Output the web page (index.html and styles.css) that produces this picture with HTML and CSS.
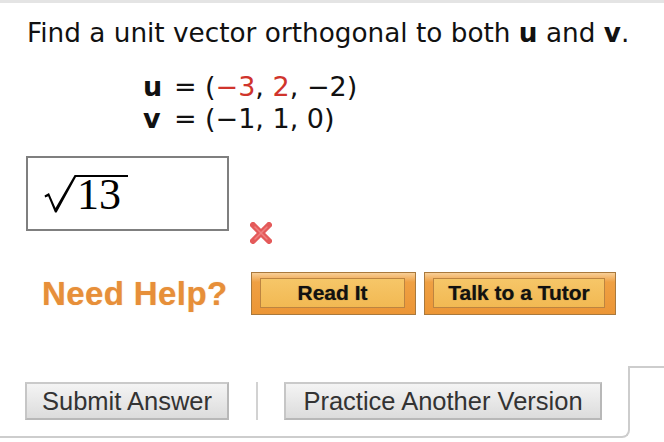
FILE: index.html
```html
<!DOCTYPE html>
<html>
<head>
<meta charset="utf-8">
<link rel="stylesheet" href="styles.css">
</head>
<body>
<div class="topbar"></div>
<main class="content">
  <p class="prompt">Find a unit vector orthogonal to both <b>u</b> and <b>v</b>.</p>
  <div class="vectors">
    <b>u</b><span class="eq">=</span><span>(<span class="red">−3</span>, <span class="red">2</span>, −2)</span>
    <b>v</b><span class="eq">=</span><span>(−1, 1, 0)</span>
  </div>
  <div class="answer-row">
    <div class="answer-box">
      <span class="sqrt">
        <svg class="radical" viewBox="0 0 32 38" width="32" height="38">
          <polygon points="0.5,20.5 5,18 11.5,33 30.6,0 32,0 32,2 12.6,37.5 11,37.5 4.2,21.2 1.2,22.4" fill="#000"/>
        </svg>
        <span class="radicand">13</span>
      </span>
    </div>
    <svg class="wrong" viewBox="0 0 26 26" width="26" height="26">
      <g stroke="#e45a5a" stroke-width="6" stroke-linecap="round">
        <line x1="5" y1="5" x2="21" y2="21"/>
        <line x1="21" y1="5" x2="5" y2="21"/>
      </g>
      <g stroke="#ee8080" stroke-width="1.5" stroke-linecap="round">
        <line x1="7" y1="7" x2="19" y2="19"/>
        <line x1="19" y1="7" x2="7" y2="19"/>
      </g>
    </svg>
  </div>
  <div class="help-row">
    <span class="need-help">Need Help?</span>
    <span class="obtn read"><span class="obtn-inner">Read It</span></span>
    <span class="obtn tutor"><span class="obtn-inner">Talk to a Tutor</span></span>
  </div>
</main>
<footer class="footer">
  <div class="actions">
    <button class="gbtn submit">Submit Answer</button>
    <span class="sep"></span>
    <button class="gbtn practice">Practice Another Version</button>
  </div>
  <div class="rest"></div>
</footer>
</body>
</html>
```

FILE: styles.css
```css
html, body {
  margin: 0;
  padding: 0;
}
body {
  width: 664px;
  height: 442px;
  overflow: hidden;
  background: #fff;
  font-family: "DejaVu Sans", Verdana, sans-serif;
  color: #111;
}
.topbar {
  height: 3px;
  background: #e4e4e4;
}
.prompt {
  margin: 15px 0 0 27px;
  font-size: 26.3px;
  line-height: 30px;
}
.vectors {
  margin: 23px 0 0 143px;
  display: grid;
  grid-template-columns: 31px 31px auto;
  font-size: 27px;
  line-height: 32px;
}
.red {
  color: #d0342c;
}
.answer-row {
  display: flex;
  margin: 21px 0 0 26px;
}
.answer-box {
  box-sizing: border-box;
  width: 203px;
  height: 75px;
  border: 2px solid #7f7f7f;
  display: flex;
  align-items: center;
  padding-left: 16px;
}
.sqrt {
  display: flex;
  align-items: flex-start;
}
.radical {
  display: block;
}
.radicand {
  border-top: 2px solid #000;
  padding: 0 7px 0 1px;
  font-family: "Liberation Serif", "Times New Roman", serif;
  font-size: 44px;
  line-height: 36px;
  color: #000;
}
.wrong {
  align-self: flex-end;
  margin: 0 0 -15px 19px;
  filter: blur(0.6px);
}
.help-row {
  display: flex;
  align-items: center;
  height: 43px;
  margin-top: 41px;
}
.need-help {
  margin-left: 42px;
  width: 209px;
  font-family: "Liberation Sans", Arial, sans-serif;
  font-weight: bold;
  font-size: 33px;
  letter-spacing: 0.4px;
  color: #e78f39;
  text-shadow: 0 0 1px rgba(231, 143, 57, 0.6);
}
.obtn {
  box-sizing: border-box;
  height: 43px;
  display: flex;
  border: 1px solid #a9793d;
  padding: 5px 10px 6px 8px;
  background: linear-gradient(#f8cf98, #efa043 22%, #ec9636);
}
.obtn.read {
  width: 165px;
}
.obtn.tutor {
  width: 192px;
  margin-left: 8px;
}
.obtn-inner {
  flex: 1;
  display: flex;
  align-items: center;
  justify-content: center;
  border: 1px solid #bd8440;
  background: linear-gradient(#f6c668, #f2b953);
  font-family: "Liberation Sans", Arial, sans-serif;
  font-weight: bold;
  font-size: 21px;
  color: #111;
  text-shadow: 0 0 1px rgba(0, 0, 0, 0.5);
}
.footer {
  display: flex;
  height: 72px;
  margin-top: 51px;
}
.actions {
  box-sizing: border-box;
  width: 630px;
  height: 72px;
  display: flex;
  align-items: flex-start;
  padding: 16px 0 0 25px;
  border-right: 2px solid #cdcdcd;
  border-bottom: 2px solid #cdcdcd;
  border-bottom-right-radius: 8px;
}
.rest {
  flex: 1;
  border-top: 2px solid #cdcdcd;
}
.gbtn {
  box-sizing: border-box;
  height: 38px;
  padding: 0;
  margin: 0;
  border: 2px solid #b8b8b8;
  border-top-color: #cacaca;
  border-left-color: #c6c6c6;
  background: linear-gradient(#f4f4f4, #dcdcdc);
  font-family: "Liberation Sans", Arial, sans-serif;
  font-size: 25.5px;
  color: #333;
}
.gbtn.submit {
  width: 204px;
}
.gbtn.practice {
  width: 318px;
}
.sep {
  width: 2px;
  height: 38px;
  background: #d2d2d2;
  margin: 0 26px 0 27px;
}
```
